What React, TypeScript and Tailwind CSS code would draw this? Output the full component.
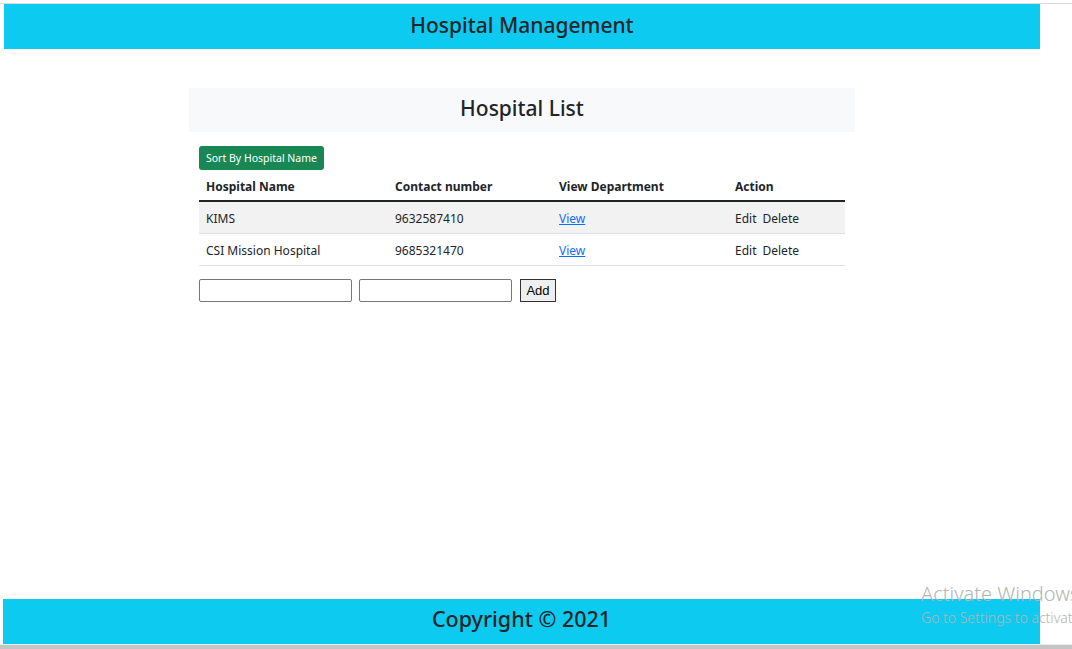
import React from "react";

const font = { fontFamily: '"Noto Sans", "Open Sans", sans-serif' };

export default function App() {
  return (
    <div
      className="relative w-[1072px] h-[649px] overflow-hidden bg-white flex flex-col text-[#212529]"
      style={font}
    >
      <div className="h-[3px] shrink-0" />
      <div className="h-[1px] shrink-0 bg-[#dcdcdc]" />
      <header className="ml-[4px] w-[1036px] h-[45px] shrink-0 bg-[#0dcaf0] flex items-center justify-center pb-[3px]">
        <h1 className="text-[21px] leading-none font-medium text-[#212529]">Hospital Management</h1>
      </header>

      <main className="ml-[189px] w-[666px] mt-[39px] flex flex-col">
        <div className="h-[44px] shrink-0 bg-[#f8f9fa] flex items-center justify-center pb-[4px]">
          <h2 className="text-[21px] leading-none font-medium">Hospital List</h2>
        </div>
        <div className="px-[10px] flex flex-col">
          <div className="mt-[14px] flex h-[24px]">
            <button className="h-[24px] px-[7px] rounded-[3px] bg-[#198754] text-white text-[10.5px] leading-none">
              Sort By Hospital Name
            </button>
          </div>
          <table className="w-[646px] border-collapse text-[12px] leading-[16px] text-left">
            <thead>
              <tr className="h-[31px] border-b-2 border-[#212529]">
                <th className="w-[189px] pl-[7px] pt-[3px] font-bold">Hospital Name</th>
                <th className="w-[164px] pl-[7px] pt-[3px] font-bold">Contact number</th>
                <th className="w-[176px] pl-[7px] pt-[3px] font-bold">View Department</th>
                <th className="pl-[7px] pt-[3px] font-bold">Action</th>
              </tr>
            </thead>
            <tbody>
              <tr className="h-[32px] bg-[#f2f2f2] border-b border-[#dee2e6]">
                <td className="pl-[7px] pt-[3px]">KIMS</td>
                <td className="pl-[7px] pt-[3px]">9632587410</td>
                <td className="pl-[7px] pt-[3px]">
                  <a className="text-[#0d6efd] underline cursor-pointer">View</a>
                </td>
                <td className="pl-[7px] pt-[3px]">
                  <span>Edit</span>
                  <span className="ml-[6px]">Delete</span>
                </td>
              </tr>
              <tr className="h-[32px] border-b border-[#dee2e6]">
                <td className="pl-[7px] pt-[3px]">CSI Mission Hospital</td>
                <td className="pl-[7px] pt-[3px]">9685321470</td>
                <td className="pl-[7px] pt-[3px]">
                  <a className="text-[#0d6efd] underline cursor-pointer">View</a>
                </td>
                <td className="pl-[7px] pt-[3px]">
                  <span>Edit</span>
                  <span className="ml-[6px]">Delete</span>
                </td>
              </tr>
            </tbody>
          </table>
          <div className="mt-[13px] flex items-center">
            <input className="w-[153px] h-[23px] border border-[#767676] rounded-[2px] bg-white" />
            <input className="ml-[7px] w-[153px] h-[23px] border border-[#767676] rounded-[2px] bg-white" />
            <button
              className="ml-[8px] w-[36px] h-[23px] border border-[#333] bg-[#efefef] text-[13px] leading-none text-black"
              style={{ fontFamily: '"Liberation Sans", Arial, sans-serif' }}
            >
              Add
            </button>
          </div>
        </div>
      </main>

      <div className="flex-1" />
      <footer className="ml-[3px] w-[1037px] h-[45px] shrink-0 bg-[#0dcaf0] flex items-center justify-center pb-[5px]">
        <p className="text-[21.5px] leading-none font-medium text-[#212529]">Copyright © 2021</p>
      </footer>
      <div className="h-[1px] shrink-0 bg-[#ececec]" />
      <div className="h-[4px] shrink-0 bg-[#c4c4c4]" />

      <div className="absolute left-[921px] top-[582px] text-[#b4b4b4] whitespace-nowrap pointer-events-none">
        <div className="text-[20px] leading-[24px] font-light">Activate Windows</div>
        <div className="mt-[3px] text-[14px] leading-[18px] font-light">Go to Settings to activate Windows.</div>
      </div>
    </div>
  );
}
